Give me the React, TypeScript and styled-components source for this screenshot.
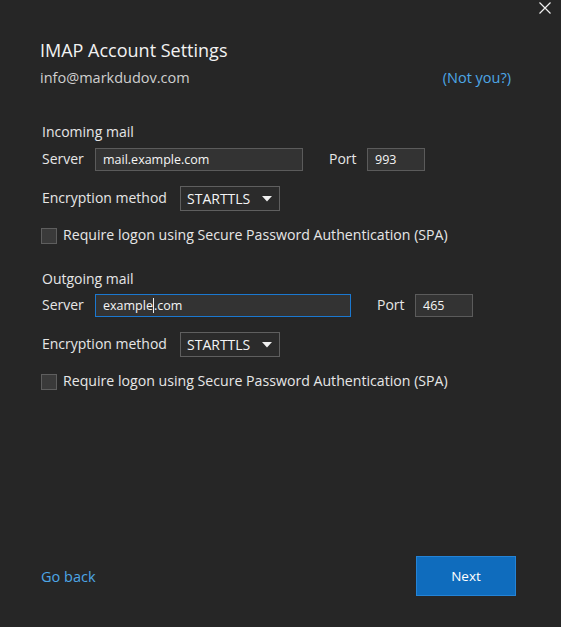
import styled, { createGlobalStyle } from "styled-components";

const GlobalStyle = createGlobalStyle`
  html, body {
    margin: 0;
    padding: 0;
    background: #262626;
  }
  * {
    box-sizing: border-box;
  }
`;

const Dialog = styled.div`
  position: relative;
  width: 561px;
  height: 627px;
  display: flex;
  flex-direction: column;
  padding: 38px 45px 31px 42px;
  background: #262626;
  color: #e6e6e6;
  font-family: "Open Sans", "Noto Sans", sans-serif;
  font-size: 14px;
  overflow: hidden;
`;

const CloseButton = styled.button`
  position: absolute;
  top: 0;
  right: 8px;
  width: 16px;
  height: 16px;
  padding: 0;
  border: none;
  background: transparent;
  display: flex;
  align-items: center;
  justify-content: center;
  cursor: pointer;
`;

const Title = styled.h1`
  margin: 0 0 0 -2px;
  font-size: 18px;
  font-weight: 400;
  line-height: 24px;
  color: #f2f2f2;
`;

const AccountRow = styled.div`
  margin: 6px 5px 0 -2px;
  display: flex;
  justify-content: space-between;
  line-height: 20px;
`;

const Email = styled.span`
  color: #cfcfcf;
  font-size: 14.5px;
`;

const Link = styled.a`
  color: #4da6e6;
  font-size: 14.5px;
  text-decoration: none;
  cursor: pointer;
`;

const Section = styled.section<{ $top: number }>`
  margin-top: ${({ $top }) => $top}px;
  display: flex;
  flex-direction: column;
`;

const SectionTitle = styled.div`
  line-height: 20px;
  color: #e6e6e6;
`;

const Row = styled.div<{ $top: number }>`
  margin-top: ${({ $top }) => $top}px;
  display: flex;
  align-items: center;
`;

const Label = styled.span<{ $width: number }>`
  width: ${({ $width }) => $width}px;
  flex-shrink: 0;
  line-height: 20px;
  margin-top: -2px;
`;

const Field = styled.div<{ $width: number; $focused?: boolean }>`
  width: ${({ $width }) => $width}px;
  height: 23px;
  padding: 0 7px;
  display: flex;
  align-items: center;
  background: #333333;
  border: 1px solid ${({ $focused }) => ($focused ? "#1b78d0" : "#5b5b5b")};
  color: #f5f5f5;
  font-size: 12.5px;
  white-space: nowrap;
`;

const Caret = styled.span`
  display: inline-block;
  width: 1px;
  height: 15px;
  background: #f0f0f0;
  vertical-align: middle;
`;

const Spacer = styled.div<{ $width: number }>`
  width: ${({ $width }) => $width}px;
  flex-shrink: 0;
`;

const Select = styled.div`
  width: 100px;
  height: 25px;
  padding: 0 7px 0 6px;
  display: flex;
  align-items: center;
  justify-content: space-between;
  border: 1px solid #5f5f5f;
  background: #2b2b2b;
  color: #f5f5f5;
  font-size: 14px;
`;

const CheckRow = styled.label`
  display: flex;
  align-items: center;
  gap: 6px;
  margin-left: -1px;
  cursor: pointer;
`;

const Box = styled.span`
  width: 16px;
  height: 16px;
  flex-shrink: 0;
  background: #3a3a3a;
  border: 1px solid #5e5e5e;
`;

const CheckText = styled.span`
  line-height: 20px;
  font-size: 14.15px;
  margin-top: -1px;
`;

const Footer = styled.div`
  margin: auto 0 0 -1px;
  display: flex;
  align-items: center;
  justify-content: space-between;
`;

const BackLink = styled.a`
  color: #4da6e6;
  font-size: 14.5px;
  cursor: pointer;
`;

const NextButton = styled.button`
  width: 100px;
  height: 40px;
  background: #0f6cbd;
  border: 1px solid #2483d6;
  color: #ffffff;
  font-family: inherit;
  font-size: 13.5px;
  cursor: pointer;
`;

const CloseIcon = () => (
  <svg width="12" height="12" viewBox="0 0 12 12">
    <path d="M0.5 0.5 L11.5 11.5 M11.5 0.5 L0.5 11.5" stroke="#f0f0f0" strokeWidth="1.2" />
  </svg>
);

const ArrowIcon = () => (
  <svg width="10" height="6" viewBox="0 0 10 6">
    <path d="M0 0 H10 L5 5.5 Z" fill="#f0f0f0" />
  </svg>
);

type ServerSection = {
  title: string;
  server: React.ReactNode;
  serverWidth: number;
  focused?: boolean;
  gap: number;
  port: string;
};

const MailSection = ({ s, top, rowTop }: { s: ServerSection; top: number; rowTop: number }) => (
  <Section $top={top}>
    <SectionTitle>{s.title}</SectionTitle>
    <Row $top={rowTop}>
      <Label $width={53}>Server</Label>
      <Field $width={s.serverWidth} $focused={s.focused}>
        {s.server}
      </Field>
      <Spacer $width={s.gap} />
      <Label $width={38}>Port</Label>
      <Field $width={58}>{s.port}</Field>
    </Row>
    <Row $top={15}>
      <Label $width={138}>Encryption method</Label>
      <Select>
        <span>STARTTLS</span>
        <ArrowIcon />
      </Select>
    </Row>
    <Row $top={15}>
      <CheckRow>
        <Box />
        <CheckText>Require logon using Secure Password Authentication (SPA)</CheckText>
      </CheckRow>
    </Row>
  </Section>
);

export default function App() {
  const incoming: ServerSection = {
    title: "Incoming mail",
    server: "mail.example.com",
    serverWidth: 208,
    gap: 26,
    port: "993",
  };
  const outgoing: ServerSection = {
    title: "Outgoing mail",
    server: (
      <>
        example
        <Caret />
        .com
      </>
    ),
    serverWidth: 256,
    focused: true,
    gap: 26,
    port: "465",
  };

  return (
    <>
      <GlobalStyle />
      <Dialog>
        <CloseButton aria-label="Close">
          <CloseIcon />
        </CloseButton>
        <Title>IMAP Account Settings</Title>
        <AccountRow>
          <Email>info@markdudov.com</Email>
          <Link>(Not you?)</Link>
        </AccountRow>
        <MailSection s={incoming} top={34} rowTop={6} />
        <MailSection s={outgoing} top={24} rowTop={5} />
        <Footer>
          <BackLink>Go back</BackLink>
          <NextButton>Next</NextButton>
        </Footer>
      </Dialog>
    </>
  );
}
